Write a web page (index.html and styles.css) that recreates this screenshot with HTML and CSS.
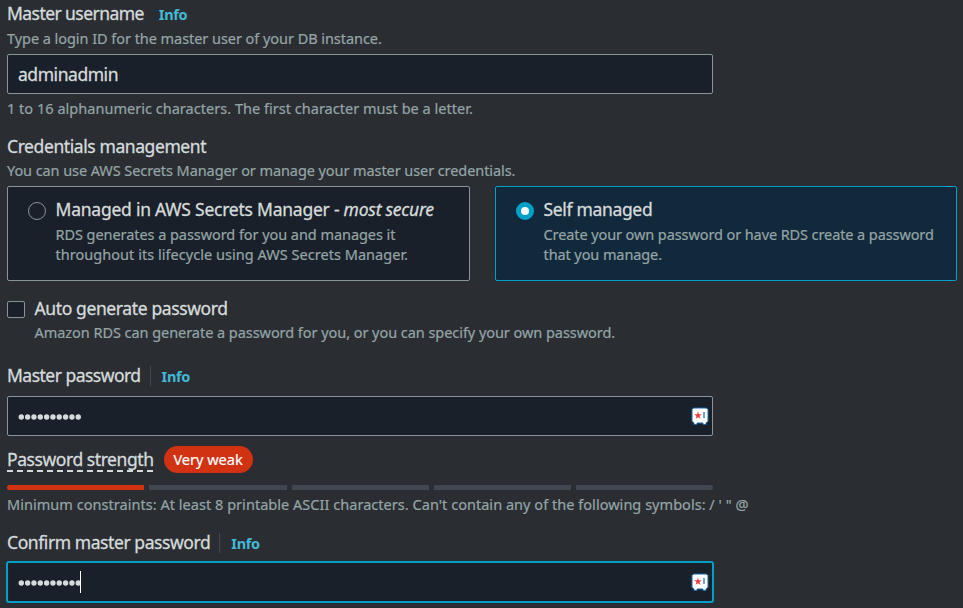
FILE: index.html
```html
<!DOCTYPE html>
<html lang="en">
<head>
<meta charset="utf-8">
<title>Credentials settings</title>
<link rel="stylesheet" href="styles.css">
</head>
<body>
<form class="form">
  <section class="field">
    <div class="heading"><span class="label t-username">Master username</span><a class="info info-plain">Info</a></div>
    <p class="hint"><span class="t-login">Type a login ID for the master user of your DB instance.</span></p>
    <div class="input"><span class="t-value">adminadmin</span></div>
    <p class="hint constraint"><span class="t-chars">1 to 16 alphanumeric characters. The first character must be a letter.</span></p>
  </section>
  <section class="field credentials">
    <div class="heading"><span class="label t-cred">Credentials management</span></div>
    <p class="hint"><span class="t-use">You can use AWS Secrets Manager or manage your master user credentials.</span></p>
    <div class="tiles">
      <div class="tile">
        <span class="radio"></span>
        <div>
          <div class="label t-managed">Managed in AWS Secrets Manager - <em>most secure</em></div>
          <p class="hint"><span class="t-rds">RDS generates a password for you and manages it</span><br><span class="t-life">throughout its lifecycle using AWS Secrets Manager.</span></p>
        </div>
      </div>
      <div class="tile selected">
        <span class="radio checked"></span>
        <div>
          <div class="label t-self">Self managed</div>
          <p class="hint t-own">Create your own password or have RDS create a password<br>that you manage.</p>
        </div>
      </div>
    </div>
  </section>
  <section class="auto">
    <span class="checkbox"></span>
    <div>
      <div class="label t-auto">Auto generate password</div>
      <p class="hint t-amazon">Amazon RDS can generate a password for you, or you can specify your own password.</p>
    </div>
  </section>
  <section class="field password">
    <div class="heading"><span class="label t-password">Master password</span><a class="info">Info</a></div>
    <div class="input">
      <svg class="dots" viewBox="0 0 64 8"><path d="M3.300 4h58"/></svg>
      <svg class="vault" viewBox="0 0 18 19"><path d="M2.500 1h13l1.500 1.500v12L15 16v1.500h-3V16H6v1.500H3V16l-2-1.500v-12z" fill="#fff" stroke="#1768ad"/><path d="M7 4.500l.9 2.700h2.900L8.500 9l.9 2.800L7 10.200l-2.400 1.600.9-2.800-2.300-1.800h2.900z" fill="#ee3a3f"/><path d="M13 5v6" stroke="#1768ad" stroke-width="1.200"/></svg>
    </div>
    <div class="strength"><span class="label t-strength">Password strength</span><span class="badge"><span class="t-weak">Very weak</span></span></div>
    <div class="meter"><b class="on"></b><b></b><b></b><b></b><b></b></div>
    <p class="hint minimum"><span class="t-min">Minimum constraints: At least 8 printable ASCII characters. Can't contain any of the following symbols: / ' " @</span></p>
  </section>
  <section class="field confirm">
    <div class="heading"><span class="label t-confirm">Confirm master password</span><a class="info">Info</a></div>
    <div class="input focused">
      <svg class="dots" viewBox="0 0 64 8"><path d="M3.300 4h58"/></svg><span class="caret"></span>
      <svg class="vault" viewBox="0 0 18 19"><path d="M2.500 1h13l1.500 1.500v12L15 16v1.500h-3V16H6v1.500H3V16l-2-1.500v-12z" fill="#fff" stroke="#1768ad"/><path d="M7 4.500l.9 2.700h2.900L8.500 9l.9 2.800L7 10.200l-2.400 1.600.9-2.800-2.300-1.800h2.900z" fill="#ee3a3f"/><path d="M13 5v6" stroke="#1768ad" stroke-width="1.200"/></svg>
    </div>
  </section>
</form>
</body>
</html>
```
FILE: styles.css
```css
* { box-sizing: border-box; }
body { margin: 0; background: #2a2e33; color: #d5dbdb; font-family: "Noto Sans", sans-serif; height: 608px; overflow: hidden; }
.form { padding: 2px 6px 0 7px; }
p { margin: 0; }
.heading { display: flex; height: 22px; align-items: center; }
.label { font-size: 17.5px; line-height: 22px; white-space: nowrap; -webkit-text-stroke: .3px; }
.hint { font-size: 14.5px; line-height: 20px; color: #95a5a6; white-space: nowrap; -webkit-text-stroke: .2px; }
.field > .heading + .hint { padding-top: 4px; }
.info { font-size: 14.5px; font-weight: 700; line-height: 20px; color: #44b9d6; letter-spacing: -.3px; margin-left: 9px; padding-left: 11px; border-left: 1px solid #414750; position: relative; top: 1px; }
.info-plain { border-left: 0; padding-left: 6px; }
.input { width: 706px; height: 40px; margin-top: 6px; padding: 0 3px 0 10px; display: flex; align-items: center; background: #1a2029; border: 1px solid #879596; border-radius: 2px; font-size: 17.5px; }
.constraint { margin-top: 4px; }
.credentials { margin-top: 17px; }
.credentials > .heading + .hint { padding-top: 3px; }
.tiles { display: grid; grid-template-columns: 463px 462px; gap: 25px; margin-top: 6px; }
.tile { height: 95px; border: 1px solid #879596; border-radius: 2px; background: #1a2029; padding: 11px 0 0 20px; display: flex; gap: 9.5px; }
.tile .hint { margin-top: 4px; }
.tile.selected { background: #12293b; border-color: #00a1c9; }
.radio { width: 18px; height: 18px; margin-top: 4px; border-radius: 50%; border: 1px solid #879596; flex: none; }
.radio.checked { border: 5.500px solid #00a1c9; background: #fff; }
.auto { display: flex; gap: 9.5px; margin-top: 16px; }
.auto .hint { margin-top: 3px; }
.checkbox { width: 18px; height: 17px; margin-top: 4px; border: 1px solid #879596; border-radius: 2px; background: #1a2029; }
.password { margin-top: 22px; }
.password .input { margin-top: 10px; }
.dots { width: 64px; height: 8px; margin-top: 2px; fill: none; stroke: #d5dbdb; stroke-width: 5.400; stroke-linecap: round; stroke-dasharray: 0 6.330; }
.vault { width: 18px; height: 19px; margin-left: auto; }
.strength { display: flex; align-items: center; margin-top: 10px; height: 27px; gap: 10px; }
.t-strength { height: 24px; background: repeating-linear-gradient(90deg, #d5dbdb 0 6px, transparent 6px 10px) left bottom / 100% 2px no-repeat; }
.badge { width: 89px; height: 27px; border-radius: 14px; background: #d13212; color: #fff; font-size: 14.5px; line-height: 27px; text-align: center; white-space: nowrap; -webkit-text-stroke: .2px; }
.meter { width: 706px; height: 5px; margin-top: 12px; display: grid; grid-template-columns: 137px 138px 137px 137px 137px; gap: 5px; border-radius: 3px; overflow: hidden; }
.meter b { background: #414750; }
.meter .on { background: #d13212; }
.minimum { margin-top: 4px; }
.confirm { margin-top: 17px; }
.confirm .input { margin: 8px 0 0 -1px; }
.input.focused { width: 708px; height: 42px; border: 2px solid #00a1c9; border-radius: 3px; }
.caret { width: 1px; height: 22px; background: #fff; margin-left: -2px; }

/* tracking */
.t-username { letter-spacing: -.56px; }
.t-value { letter-spacing: -.45px; -webkit-text-stroke: .3px; }
.t-login { letter-spacing: -.05px; }
.t-chars { letter-spacing: .025px; }
.t-cred { letter-spacing: -.41px; }
.t-use { letter-spacing: -.08px; }
.t-managed { letter-spacing: -.235px; }
.t-rds { letter-spacing: -.06px; }
.t-life { letter-spacing: .035px; }
.t-self { letter-spacing: -.33px; }
.t-own { letter-spacing: -.095px; }
.t-auto { letter-spacing: -.38px; }
.t-amazon { letter-spacing: -.05px; }
.t-password { letter-spacing: -.52px; }
.t-strength { letter-spacing: -.43px; }
.t-min { letter-spacing: .035px; }
.t-confirm { letter-spacing: -.42px; }
```
